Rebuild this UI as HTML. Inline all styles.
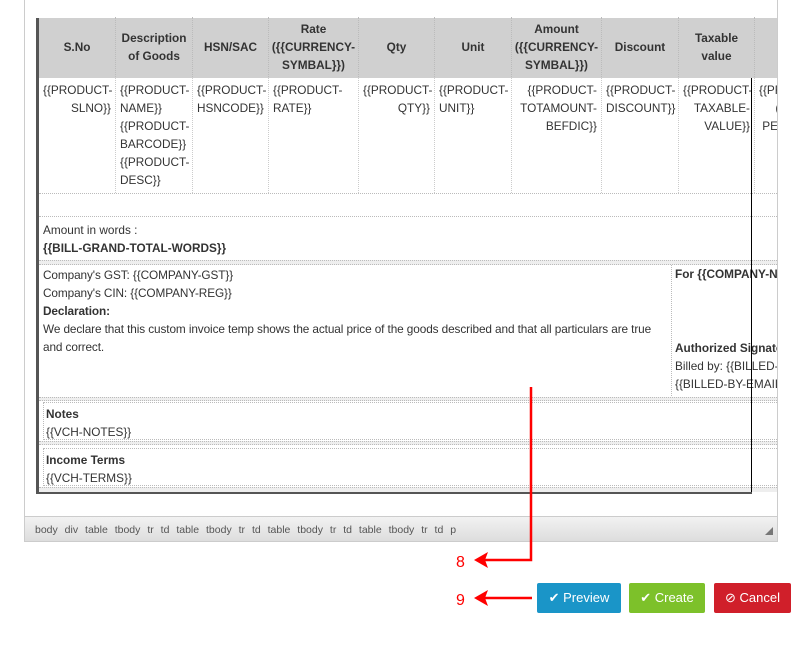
<!DOCTYPE html>
<html><head><style>
*{margin:0;padding:0;box-sizing:border-box}
body{width:800px;height:645px;background:#fff;font-family:"Liberation Sans",Arial,sans-serif;font-size:11.8px;color:#333;position:relative;overflow:hidden}
.a{position:absolute}
.ed{left:24px;top:-2px;width:754px;height:544px;border:1px solid #ccc;background:#fff;overflow:hidden}
.clip{left:0;top:0;width:752px;height:517px;overflow:hidden}
.hd{left:14px;top:19px;width:740px;height:60px;background:#d0d0d0}
.th{position:absolute;top:18px;height:60px;font-weight:bold;display:flex;align-items:center;justify-content:center;text-align:center;line-height:18px;border-right:1px dotted #bbb}
.td{position:absolute;top:79px;height:115px;padding:3px 4px;line-height:18px;border-right:1px dotted #ccc}
.r{text-align:right}
.dl{position:absolute;left:14px;width:740px;border-top:1px dotted #bbb}
.bar{left:0;top:517px;width:752px;height:25px;background:linear-gradient(#f2f2f2,#ddd);border-top:1px solid #ccc;font-size:10.5px;color:#555;padding:7px 0 0 10px;word-spacing:4px}
.btn{position:absolute;top:583px;height:30px;color:#fff;font-size:13px;display:flex;align-items:center;justify-content:center;border-radius:2px}
</style></head><body>
<div class="a ed">
<div class="a clip">
<div class="a" style="left:11px;top:19px;width:3px;height:476px;background:#555"></div>
<div class="a hd"></div>
<div class="th" style="left:14px;width:77px">S.No</div>
<div class="th" style="left:91px;width:77px">Description<br>of Goods</div>
<div class="th" style="left:168px;width:76px">HSN/SAC</div>
<div class="th" style="left:244px;width:90px">Rate<br>({{CURRENCY-<br>SYMBAL}})</div>
<div class="th" style="left:334px;width:76px">Qty</div>
<div class="th" style="left:410px;width:77px">Unit</div>
<div class="th" style="left:487px;width:90px">Amount<br>({{CURRENCY-<br>SYMBAL}})</div>
<div class="th" style="left:577px;width:77px">Discount</div>
<div class="th" style="left:654px;width:76px">Taxable<br>value</div>
<div class="td r" style="left:14px;width:77px">{{PRODUCT-<br>SLNO}}</div>
<div class="td" style="left:91px;width:77px">{{PRODUCT-<br>NAME}}<br>{{PRODUCT-<br>BARCODE}}<br>{{PRODUCT-<br>DESC}}</div>
<div class="td" style="left:168px;width:76px">{{PRODUCT-<br>HSNCODE}}</div>
<div class="td" style="left:244px;width:90px">{{PRODUCT-<br>RATE}}</div>
<div class="td r" style="left:334px;width:76px">{{PRODUCT-<br>QTY}}</div>
<div class="td" style="left:410px;width:77px">{{PRODUCT-<br>UNIT}}</div>
<div class="td r" style="left:487px;width:90px">{{PRODUCT-<br>TOTAMOUNT-<br>BEFDIC}}</div>
<div class="td" style="left:577px;width:77px">{{PRODUCT-<br>DISCOUNT}}</div>
<div class="td r" style="left:654px;width:76px">{{PRODUCT-<br>TAXABLE-<br>VALUE}}</div>
<div class="td" style="left:730px;width:60px">{{PR<br>&nbsp;&nbsp;&nbsp;&nbsp;&nbsp;(<br>&nbsp;PE</div>
<div class="dl" style="top:194px"></div>
<div class="dl" style="top:217px"></div>
<div class="a" style="left:18px;top:222px;line-height:18px">Amount in words :<br><b>{{BILL-GRAND-TOTAL-WORDS}}</b></div>
<div class="a" style="left:14px;top:261px;width:740px;height:5px;border-top:1px dotted #bbb;border-bottom:1px dotted #bbb;background:#eee"></div>
<div class="a" style="left:18px;top:267px;width:625px;line-height:18px;letter-spacing:-0.1px">Company's GST: {{COMPANY-GST}}<br>Company's CIN: {{COMPANY-REG}}<br><b>Declaration:</b><br>We declare that this custom invoice temp shows the actual price of the goods described and that all particulars are true and correct.</div>
<div class="a" style="left:646px;top:266px;height:131px;border-left:1px dotted #bbb"></div>
<div class="a" style="left:650px;top:268px;white-space:nowrap;font-weight:bold">For {{COMPANY-NAME}}</div>
<div class="a" style="left:650px;top:340px;white-space:nowrap;line-height:18px"><b>Authorized Signatory</b><br>Billed by: {{BILLED-BY}}<br>{{BILLED-BY-EMAIL}}</div>
<div class="a" style="left:14px;top:398px;width:740px;height:4px;border-top:1px dotted #bbb;border-bottom:1px dotted #bbb;background:#eee"></div>
<div class="a" style="left:18px;top:403px;width:736px;height:38px;border:1px dotted #bbb;padding:2px 2px;line-height:18px"><b>Notes</b><br>{{VCH-NOTES}}</div>
<div class="a" style="left:14px;top:442px;width:740px;height:4px;border-top:1px dotted #bbb;border-bottom:1px dotted #bbb;background:#eee"></div>
<div class="a" style="left:18px;top:449px;width:736px;height:38px;border:1px dotted #bbb;padding:2px 2px;line-height:18px"><b>Income Terms</b><br>{{VCH-TERMS}}</div>
<div class="a" style="left:14px;top:488px;width:740px;height:5px;border-top:1px dotted #bbb;background:#eee"></div>
<div class="a" style="left:726px;top:79px;width:1px;height:416px;background:#000"></div>
<div class="a" style="left:11px;top:493px;width:716px;height:2px;background:#555"></div>
</div>
<div class="a bar">body div table tbody tr td table tbody tr td table tbody tr td table tbody tr td p</div>
<div class="a" style="left:740px;top:528px;width:0;height:0;border-left:8px solid transparent;border-bottom:8px solid #777"></div>
</div>
<svg class="a" style="left:0;top:0" width="800" height="645">
<path d="M531 387V560H484" stroke="#f00" stroke-width="2.5" fill="none"/>
<path d="M474 560l14-8-3 8 3 8z" fill="#f00"/>
<path d="M532 598H484" stroke="#f00" stroke-width="2.5" fill="none"/>
<path d="M474 598l14-8-3 8 3 8z" fill="#f00"/>
<text x="456" y="567" fill="#f00" font-size="16" font-family="Liberation Sans">8</text>
<text x="456" y="605" fill="#f00" font-size="16" font-family="Liberation Sans">9</text>
</svg>
<div class="btn" style="left:537px;width:84px;background:#1a95c8">✔&nbsp;Preview</div>
<div class="btn" style="left:629px;width:76px;background:#7dc12a">✔&nbsp;Create</div>
<div class="btn" style="left:714px;width:77px;background:#d01f2a">⊘&nbsp;Cancel</div>
</body></html>
